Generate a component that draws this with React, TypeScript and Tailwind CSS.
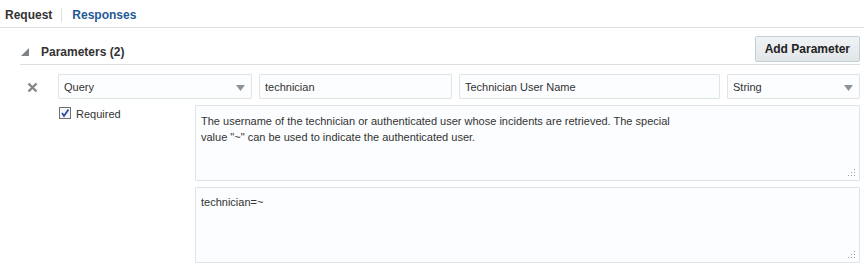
import React from "react";

const font = { fontFamily: '"Liberation Sans", Arial, sans-serif' };

function Caret() {
  return (
    <svg width="9" height="6" viewBox="0 0 9 6" className="shrink-0">
      <path d="M0 0 H9 L4.5 6 Z" fill="#8a949c" />
    </svg>
  );
}

function Grip() {
  return (
    <svg width="8" height="8" viewBox="0 0 8 8" className="absolute right-[3px] bottom-[3px]">
      <rect x="6" y="0" width="1" height="1" fill="#9aa3aa" />
      <rect x="3" y="3" width="1" height="1" fill="#9aa3aa" />
      <rect x="6" y="3" width="1" height="1" fill="#9aa3aa" />
      <rect x="0" y="6" width="1" height="1" fill="#9aa3aa" />
      <rect x="3" y="6" width="1" height="1" fill="#9aa3aa" />
      <rect x="6" y="6" width="1" height="1" fill="#9aa3aa" />
    </svg>
  );
}

export default function App() {
  return (
    <div className="w-[864px] h-[263px] bg-white text-[11px] text-[#333] overflow-hidden" style={font}>
      {/* tabs */}
      <div className="flex items-center h-[28px] border-b border-[#d9dfe3] pl-[5px] pt-[2px] text-[12px]">
        <span className="font-bold text-[#333]">Request</span>
        <span className="w-px h-[14px] bg-[#d9dfe3] ml-[9px] mr-[10px]" />
        <span className="font-bold text-[#1f5a94]">Responses</span>
      </div>

      {/* parameters header */}
      <div className="ml-[20px] mr-[4px] mt-[8px] flex items-start justify-between h-[29px] border-b border-[#d9dfe3]">
        <div className="flex items-center pt-[7px] text-[12px]">
          <svg width="8" height="8" viewBox="0 0 8 8" className="ml-[1px] mr-[12px]">
            <path d="M8 0 V8 H0 Z" fill="#7b8389" />
          </svg>
          <span className="font-bold">Parameters (2)</span>
        </div>
        <button className="h-[26px] px-[9px] font-bold text-[12px] text-[#222] border border-[#c4ced5] rounded-[2px] bg-gradient-to-b from-[#f0f3f5] to-[#e1e6e9]">
          Add Parameter
        </button>
      </div>

      {/* parameter row */}
      <div className="ml-[20px] mr-[4px] mt-[9px] flex">
        <div className="w-[38px] flex flex-col">
          <div className="h-[25px] flex items-center pl-[7px] pt-[1px]">
            <svg width="11" height="11" viewBox="0 0 11 11">
              <path d="M1.5 1.5 L9.5 9.5 M9.5 1.5 L1.5 9.5" stroke="#80878d" strokeWidth="2.4" />
            </svg>
          </div>
        </div>
        <div className="flex-1 flex flex-col gap-[6px]">
          <div className="flex gap-[7px] h-[25px]">
            <div className="w-[194px] flex items-center justify-between border border-[#dfe4e7] bg-[#fcfdfe] pl-[5px] pr-[6px] pt-[2px] rounded-[1px]">
              <span>Query</span>
              <Caret />
            </div>
            <div className="w-[193px] flex items-center border border-[#dfe4e7] bg-[#fcfdfe] px-[5px] pt-[2px] rounded-[1px]">
              technician
            </div>
            <div className="w-[261px] flex items-center border border-[#dfe4e7] bg-[#fcfdfe] px-[5px] pt-[2px] rounded-[1px]">
              Technician User Name
            </div>
            <div className="flex-1 flex items-center justify-between border border-[#dfe4e7] bg-[#fcfdfe] pl-[5px] pr-[6px] pt-[2px] rounded-[1px]">
              <span>String</span>
              <Caret />
            </div>
          </div>
          <div className="flex">
            <label className="w-[137px] flex items-start gap-[5px] pt-[2px] pl-[1px]">
              <span className="w-[12px] h-[12px] border border-[#707070] bg-[#f4f6f8] flex items-center justify-center">
                <svg width="10" height="10" viewBox="0 0 10 10">
                  <path d="M2 5 L4 8 L8.5 1.5" stroke="#2a4aa8" strokeWidth="1.8" fill="none" />
                </svg>
              </span>
              <span className="leading-[14px]">Required</span>
            </label>
            <div className="flex-1 flex flex-col gap-[6px]">
              <div className="relative h-[76px] border border-[#dfe4e7] bg-[#fcfdfe] px-[5px] pt-[7px] leading-[16px] rounded-[1px]">
                The username of the technician or authenticated user whose incidents are retrieved. The special
                <br />
                value "~" can be used to indicate the authenticated user.
                <Grip />
              </div>
              <div className="relative h-[76px] border border-[#dfe4e7] bg-[#fcfdfe] px-[5px] pt-[6px] leading-[16px] rounded-[1px]">
                technician=~
                <Grip />
              </div>
            </div>
          </div>
        </div>
      </div>
    </div>
  );
}
